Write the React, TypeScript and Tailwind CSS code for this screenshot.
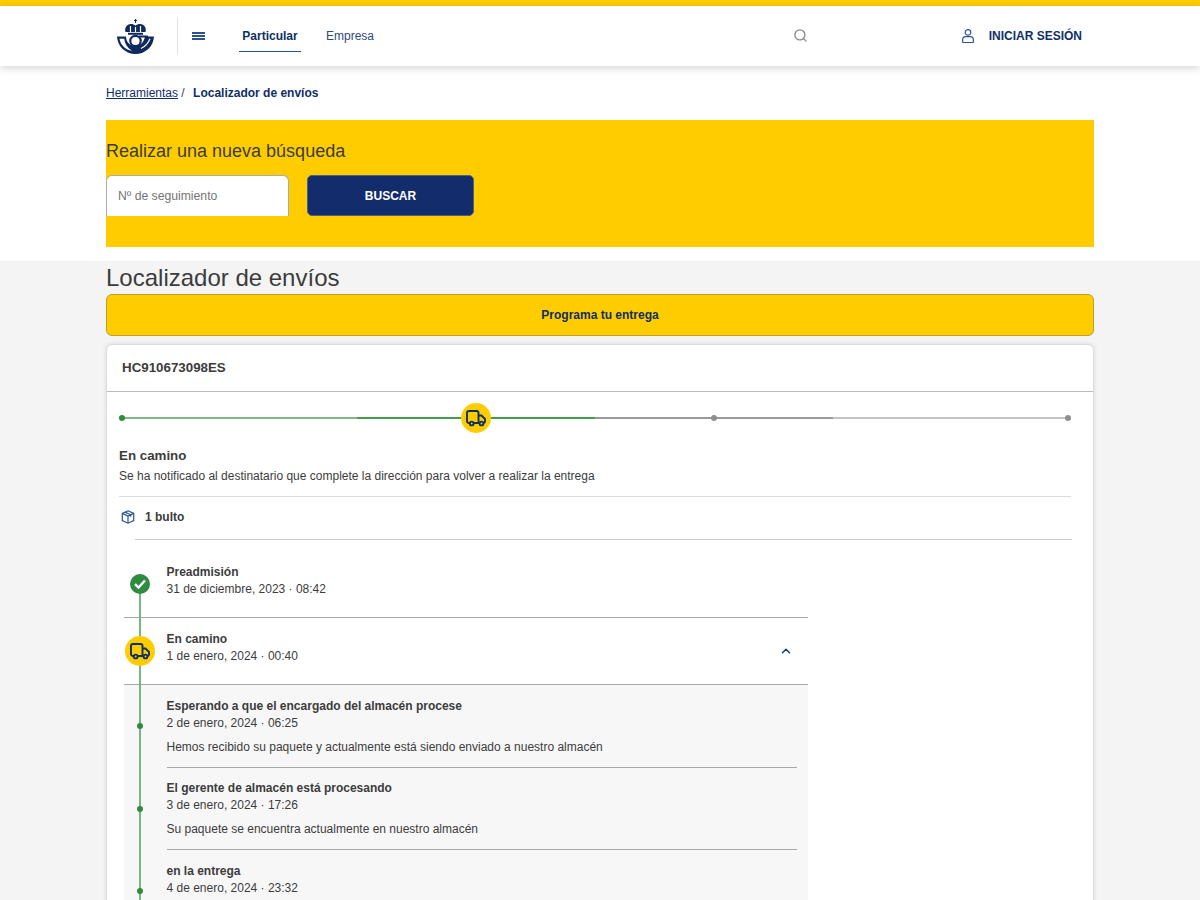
import { ChevronUp, Search } from "lucide-react";

const font = "font-['Liberation_Sans',Arial,sans-serif]";

function Logo() {
  return (
    <svg width="37" height="35" viewBox="0 0 37 35" fill="none" className="shrink-0">
      {/* corona */}
      <path d="M18.500 0v4M17 1.500h3" stroke="#0f2a5c" strokeWidth="1.100" />
      <path
        d="M8.500 13c-1.500-4.500 2-8 5.500-8 1.800 0 3.300 0.600 4.500 1.800C19.700 5.600 21.200 5 23 5c3.500 0 7 3.500 5.500 8z"
        fill="#0f2a5c"
      />
      <path d="M13.500 7v6M18.500 8v5M23.500 7v6" stroke="#fff" strokeWidth="1.200" />
      <rect x="11" y="13.800" width="15" height="2" fill="#0f2a5c" />
      {/* cuerno */}
      <path
        d="M0 17.500h9c0 5.500 4 9.500 9.500 9.500 5 0 8.500-4 9.500-9.500h9c-0.500 10-8.500 17.500-18.500 17.500S0.500 27.500 0 17.500z"
        fill="#0f2a5c"
      />
      <path d="M2.500 19.800h4.700c0.600 5.200 3.300 9.200 7.800 12-6.500-0.800-11.500-5.800-12.500-12z" fill="#fff" />
      <path d="M24 29.500c3.500-1.500 7-5 9-9.800" stroke="#fff" strokeWidth="1.200" />
      <circle cx="18.500" cy="22" r="5.200" stroke="#0f2a5c" strokeWidth="2.200" fill="#fff" />
      <path d="M22 17.500h9" stroke="#0f2a5c" strokeWidth="2" />
    </svg>
  );
}

function Truck({ size = 20 }: { size?: number }) {
  return (
    <svg width={size} height={size} viewBox="0 0 20 20" fill="none" stroke="#0f2f66" strokeWidth="1.900">
      <path d="M3.500 15H3a2 2 0 0 1-2-2V5a2 2 0 0 1 2-2h7.500a2 2 0 0 1 2 2v10H8" />
      <path d="M12.500 7.500h3l3.500 3.500v2.500a1.500 1.500 0 0 1-1.500 1.500M13.500 15h-1" />
      <circle cx="5.700" cy="15.500" r="1.900" />
      <circle cx="15.500" cy="15.500" r="1.900" />
    </svg>
  );
}

function UserIcon() {
  return (
    <svg width="12" height="14" viewBox="0 0 12 14" fill="none" stroke="#2c5391" strokeWidth="1.200" className="block">
      <circle cx="6" cy="3.400" r="2.800" />
      <path d="M0.600 11c0-2 1.300-3.300 3-3.300h4.800c1.700 0 3 1.300 3 3.300v1.500a1 1 0 0 1-1 1H1.600a1 1 0 0 1-1-1z" />
    </svg>
  );
}

function BoxIcon() {
  return (
    <svg width="14" height="14" viewBox="0 0 14 14" fill="none" stroke="#2c5391" strokeWidth="1.200">
      <path d="M7 0.800l5.700 2.600v7.200L7 13.200l-5.700-2.600V3.400z" />
      <path d="M1.300 3.400L7 6l5.700-2.600M7 6v7.200M4 2.100l5.700 2.700v2" />
    </svg>
  );
}

function CheckBadge() {
  return (
    <div className="flex h-5 w-5 items-center justify-center rounded-full bg-[#2e8b3f]">
      <svg width="12" height="10" viewBox="0 0 12 10" fill="none" stroke="#fff" strokeWidth="2.400">
        <path d="M1 5.200l3.500 3.300L11 1.500" />
      </svg>
    </div>
  );
}

function StatusRow({ title, date, icon, chevron }: { title: string; date: string; icon: React.ReactNode; chevron?: boolean }) {
  return (
    <div className="flex h-[67px] items-center border-b border-[#a8a8a8]">
      <div className="relative z-10 flex w-[31px] justify-center">{icon}</div>
      <div className="mb-[7px] ml-[11.500px] text-xs leading-[17px] text-[#3c3c3c]">
        <p className="font-bold">{title}</p>
        <p>{date}</p>
      </div>
      {chevron && <ChevronUp className="ml-auto mr-[15px] h-[14px] w-[14px] text-[#0f3a7a]" strokeWidth={2.500} />}
    </div>
  );
}

function SubEvent({ title, date, text, last }: { title: string; date: string; text?: string; last?: boolean }) {
  return (
    <div className="relative ml-[42.500px] mr-[11.500px]">
      <span className="absolute left-[-30px] top-[38px] h-[6px] w-[6px] rounded-full bg-[#2e8b3f]" />
      <div className={`pb-[11px] pt-[12.500px] text-xs leading-[17px] text-[#3c3c3c] ${last ? "" : "border-b border-[#a8a8a8]"}`}>
        <p className="font-bold">{title}</p>
        <p>{date}</p>
        {text && <p className="mt-[7px]">{text}</p>}
      </div>
    </div>
  );
}

export default function App() {
  return (
    <div className={`${font} flex h-[900px] flex-col overflow-hidden bg-white text-[#3c3c3c]`}>
      <div className="h-[6px] shrink-0 bg-[#ffcc00]" />
      <header className="relative z-10 flex h-[60px] shrink-0 items-center bg-white pl-[117px] pr-[118px] shadow-[0_2px_8px_rgba(0,0,0,0.18)]">
        <Logo />
        <div className="ml-[23px] h-[36px] w-px bg-[#e3e3e3]" />
        <div className="ml-[14px] flex w-[13px] flex-col gap-[1px]">
          <span className="h-[2px] bg-[#2c5391]" />
          <span className="h-[2px] bg-[#2c5391]" />
          <span className="h-[2px] bg-[#2c5391]" />
        </div>
        <nav className="ml-[34px] flex items-center text-xs text-[#0f2f66]">
          <a className="flex h-[31px] w-[62px] items-center justify-center border-b border-[#2c5391] font-bold">Particular</a>
          <a className="ml-[25px] text-[#2c4a7c]">Empresa</a>
        </nav>
        <Search className="mb-[1px] ml-auto h-[15px] w-[15px] text-[#8c8c8c]" strokeWidth={2.200} />
        <div className="ml-[154px]">
          <UserIcon />
        </div>
        <span className="mb-[1px] ml-[15px] text-xs font-bold text-[#0f2f66]">INICIAR SESIÓN</span>
      </header>

      <main className="flex flex-1 flex-col">
        <div className="mx-[106px] pt-[20px]">
          <p className="text-xs leading-[14px] text-[#0f2f66]">
            <a className="underline">Herramientas</a>
            <span className="text-[#444]"> / </span>
            <strong className="ml-[5px]">Localizador de envíos</strong>
          </p>
          <section className="mt-[20px] h-[127px] bg-[#ffcc00] pt-[20px]">
            <h2 className="text-lg leading-[22px] text-[#3c3c3c]">Realizar una nueva búsqueda</h2>
            <div className="mt-[13px] flex gap-[18px]">
              <div className="flex h-[41px] w-[183px] items-center rounded-t-[6px] border-x border-t border-[#aaa] bg-white pl-[11px] text-[12.200px] text-[#757575]">
                Nº de seguimiento
              </div>
              <button className="h-[41px] w-[167px] rounded-[5px] border border-[#4a5f8a] bg-[#132c6b] text-xs font-bold text-white">
                BUSCAR
              </button>
            </div>
          </section>
        </div>

        <div className="mt-[14px] flex-1 bg-[#f4f4f4] px-[106px]">
          <h1 className="text-2xl leading-[33px] text-[#3c3c3c]">Localizador de envíos</h1>
          <button className="h-[42px] w-full rounded-[6px] border border-[#bfa020] bg-[#ffcc00] text-xs font-bold text-[#0f2f66]">
            Programa tu entrega
          </button>
          <section className="mt-[8px] h-[600px] rounded-t-[6px] border border-[#dcdcdc] bg-white shadow-[0_0_4px_rgba(0,0,0,0.12)]">
            <div className="flex h-[47px] items-center border-b border-[#bbb] pl-[15px] text-[13.330px] font-bold">HC910673098ES</div>

            {/* progreso del envio */}
            <div className="ml-[12px] mr-[22px] mt-[11px] flex h-[30px]">
              <div className="relative flex flex-1 items-center">
                <span className="absolute inset-x-0 top-[14px] h-[1.500px] bg-[#7dba85]" />
                <span className="relative h-[6px] w-[6px] rounded-full bg-[#2e8b3f]" />
              </div>
              <div className="relative flex flex-1 items-center justify-center">
                <span className="absolute inset-x-0 top-[14px] h-[1.500px] bg-[#469c51]" />
                <span className="relative flex h-[30px] w-[30px] items-center justify-center rounded-full bg-[#ffcc00]">
                  <Truck />
                </span>
              </div>
              <div className="relative flex flex-1 items-center justify-center">
                <span className="absolute inset-x-0 top-[14px] h-[1.500px] bg-[#9a9a9a]" />
                <span className="relative h-[6px] w-[6px] rounded-full bg-[#8f8f8f]" />
              </div>
              <div className="relative flex flex-1 items-center justify-end">
                <span className="absolute inset-x-0 top-[14px] h-[1.500px] bg-[#c4c4c4]" />
                <span className="relative h-[6px] w-[6px] rounded-full bg-[#8f8f8f]" />
              </div>
            </div>

            <div className="ml-[12px] mr-[22px] mt-[13px] border-b border-[#ddd] pb-[10px]">
              <h3 className="text-[13.330px] font-bold leading-[20px]">En camino</h3>
              <p className="text-xs leading-[20px]">Se ha notificado al destinatario que complete la dirección para volver a realizar la entrega</p>
            </div>
            <div className="ml-[14px] flex h-[42px] items-center pb-[3px]">
              <BoxIcon />
              <span className="ml-[10px] text-xs font-bold">1 bulto</span>
            </div>
            <div className="ml-[28px] mr-[21px] border-b border-[#ccc]" />

            {/* historial */}
            <div className="relative ml-[17px] mt-[11px] w-[684px]">
              <span className="absolute bottom-0 left-[15px] top-[30px] w-[1.500px] bg-[#76b680]" />
              <StatusRow title="Preadmisión" date="31 de diciembre, 2023 · 08:42" icon={<CheckBadge />} />
              <StatusRow
                title="En camino"
                date="1 de enero, 2024 · 00:40"
                chevron
                icon={
                  <span className="flex h-[30px] w-[30px] items-center justify-center rounded-full bg-[#ffcc00]">
                    <Truck />
                  </span>
                }
              />
              <div className="bg-[#f7f7f7] pb-[40px]">
                <SubEvent
                  title="Esperando a que el encargado del almacén procese"
                  date="2 de enero, 2024 · 06:25"
                  text="Hemos recibido su paquete y actualmente está siendo enviado a nuestro almacén"
                />
                <SubEvent
                  title="El gerente de almacén está procesando"
                  date="3 de enero, 2024 · 17:26"
                  text="Su paquete se encuentra actualmente en nuestro almacén"
                />
                <SubEvent title="en la entrega" date="4 de enero, 2024 · 23:32" last />
              </div>
            </div>
          </section>
        </div>
      </main>
    </div>
  );
}
